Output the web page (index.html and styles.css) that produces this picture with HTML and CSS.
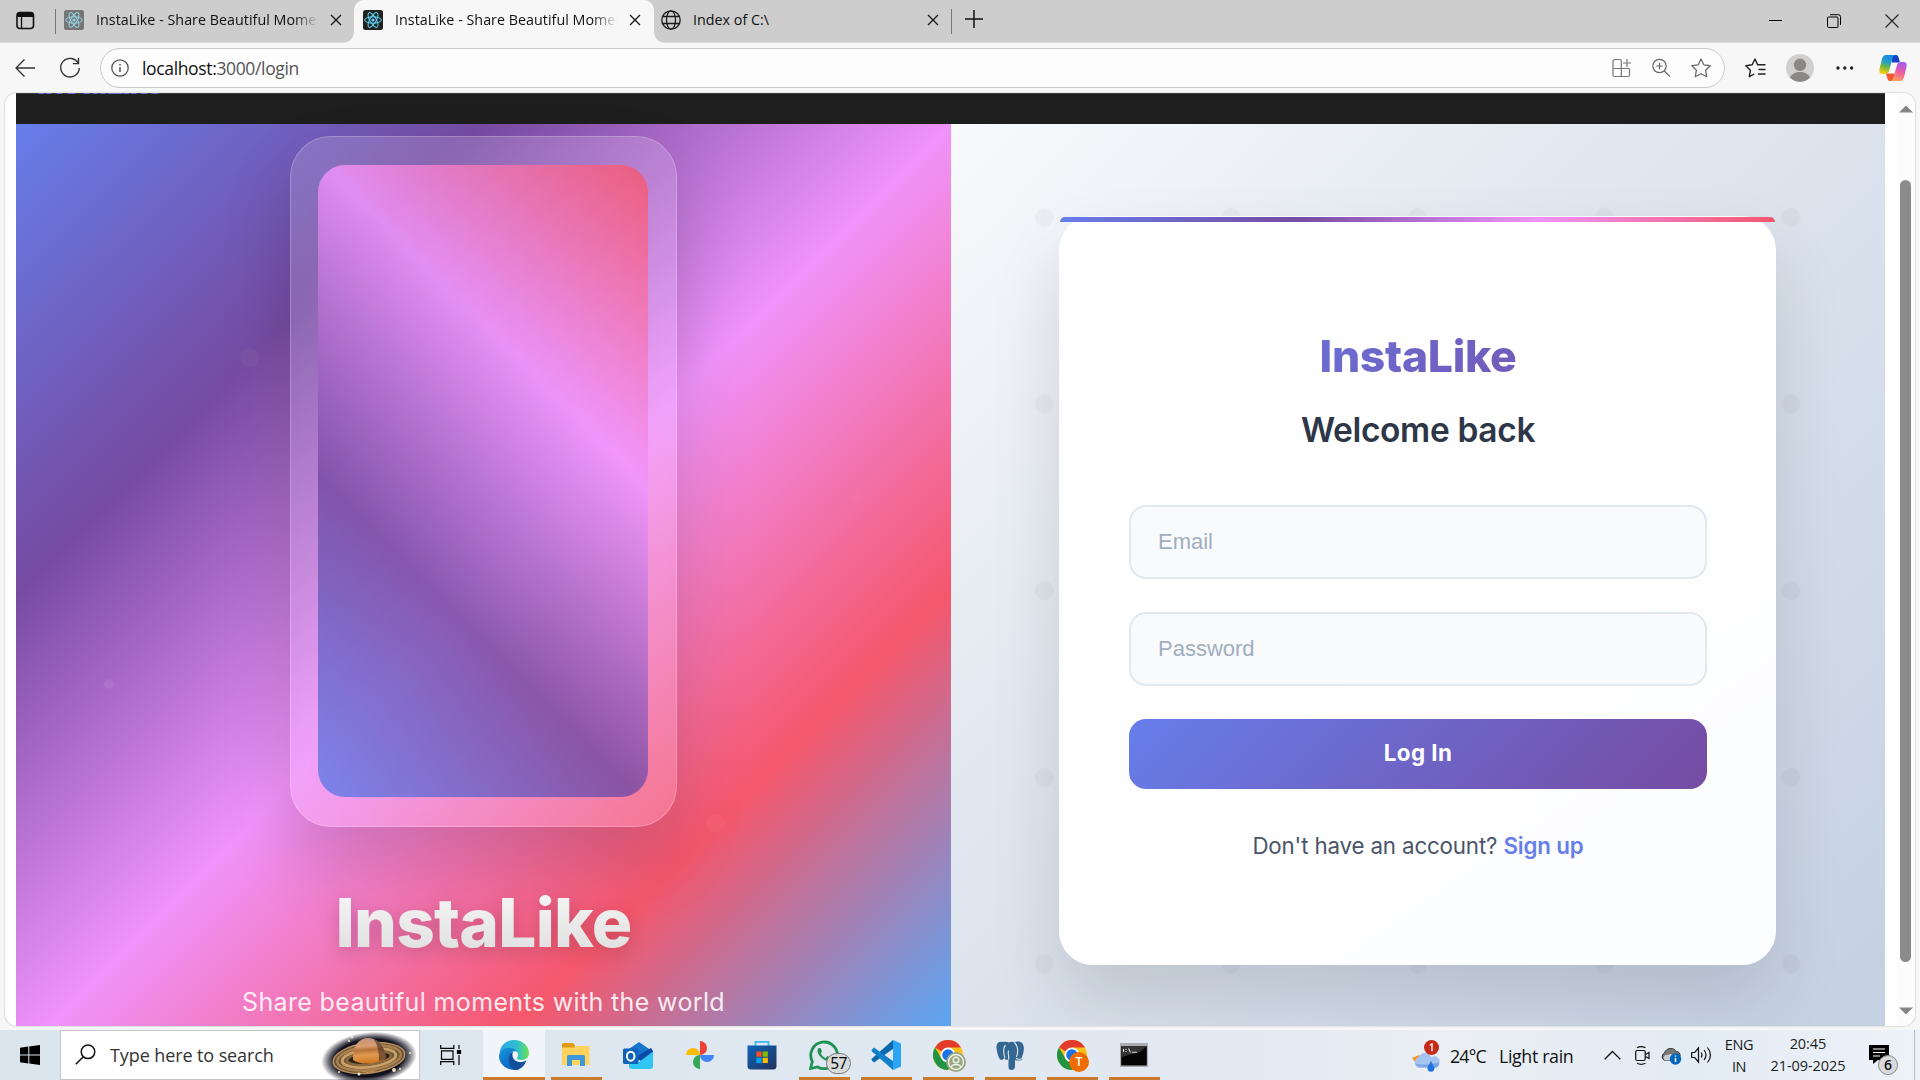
FILE: index.html
```html
<!DOCTYPE html>
<html lang="en">
<head>
<meta charset="utf-8">
<title>InstaLike - Share Beautiful Moments</title>
<link rel="stylesheet" href="styles.css">
</head>
<body>
<svg class="defs" width="0" height="0" aria-hidden="true">
  <defs>
    <symbol id="react" viewBox="0 0 20 20">
      <rect width="20" height="20" rx="2.5" fill="#222"/>
      <g fill="none" stroke="#61dafb" stroke-width="1">
        <ellipse cx="10" cy="10" rx="8.3" ry="3.2"/>
        <ellipse cx="10" cy="10" rx="8.3" ry="3.2" transform="rotate(60 10 10)"/>
        <ellipse cx="10" cy="10" rx="8.3" ry="3.2" transform="rotate(120 10 10)"/>
      </g>
      <circle cx="10" cy="10" r="1.6" fill="#61dafb"/>
    </symbol>
    <symbol id="cross" viewBox="0 0 12 12"><path d="M1 1l10 10M11 1L1 11" stroke="#1b1b1b" stroke-width="1.4" fill="none"/></symbol>
    <symbol id="chrome" viewBox="0 0 30 30">
      <circle cx="15" cy="15" r="15" fill="#fbc116"/>
      <path d="M15 15L2 7.5A15 15 0 0 1 28 7.5H15z" fill="#e33b2e"/>
      <path d="M2 7.5A15 15 0 0 0 15 30L21.5 18.7 15 15 8.5 18.7z" fill="#229342"/>
      <circle cx="15" cy="15" r="7.5" fill="#fff"/><circle cx="15" cy="15" r="5.8" fill="#1a73e8"/>
    </symbol>
  </defs>
</svg>

<div class="tabstrip">
  <div class="workspace">
    <svg width="19" height="19" viewBox="0 0 19 19"><rect x="1" y="1.5" width="16.500" height="16" rx="3" fill="none" stroke="#111" stroke-width="1.600"/><path d="M1 6V4a3 3 0 0 1 3-3h10.500a3 3 0 0 1 3 3v2z" fill="#111"/><path d="M5.500 5v12" stroke="#111" stroke-width="1.300"/></svg>
  </div>
  <i class="divider"></i>
  <div class="tab tab-first">
    <svg class="favicon faded" width="20" height="20"><use href="#react"/></svg>
    <span class="tab-title fade">InstaLike - Share Beautiful Moments</span>
    <svg class="close" width="12" height="12"><use href="#cross"/></svg>
  </div>
  <div class="tab tab-active">
    <svg class="favicon" width="20" height="20"><use href="#react"/></svg>
    <span class="tab-title fade">InstaLike - Share Beautiful Moments</span>
    <svg class="close" width="12" height="12"><use href="#cross"/></svg>
  </div>
  <div class="tab tab-last">
    <svg class="favicon" width="20" height="20" viewBox="0 0 20 20" fill="none" stroke="#1b1b1b" stroke-width="1.300"><circle cx="10" cy="10" r="9.200"/><ellipse cx="10" cy="10" rx="4.500" ry="9.200"/><path d="M1.700 6.500h16.600M1.700 13.500h16.600"/></svg>
    <span class="tab-title">Index of C:\</span>
    <svg class="close" width="12" height="12"><use href="#cross"/></svg>
  </div>
  <i class="divider"></i>
  <svg class="plus" width="18" height="18" viewBox="0 0 18 18"><path d="M9 0v18M0 9h18" stroke="#111" stroke-width="1.500"/></svg>
  <div class="window-controls">
    <svg width="14" height="14" viewBox="0 0 14 14"><path d="M0 6.500h13" stroke="#000"/></svg>
    <svg width="14" height="14" viewBox="0 0 14 14" fill="none" stroke="#000"><rect x=".5" y="3" width="10.500" height="10.500" rx="1"/><path d="M3 .7h8.500a2 2 0 0 1 2 2V11"/></svg>
    <svg width="14" height="14" viewBox="0 0 14 14"><path d="M.5.5l13 13M13.500.5l-13 13" stroke="#222" stroke-width="1.100"/></svg>
  </div>
</div>

<div class="toolbar">
  <svg class="back" width="20" height="20" viewBox="0 0 20 20" fill="none" stroke="#333" stroke-width="1.300"><path d="M20 10H1M9.500 1.500L1 10l8.500 8.500"/></svg>
  <svg class="reload" width="22" height="22" viewBox="0 0 22 22" fill="none" stroke="#333" stroke-width="1.400"><path d="M19.300 6.500A9.300 9.300 0 1 0 20.300 11M19.500 1v5.600h-5.700"/></svg>
  <div class="address">
    <svg width="18" height="18" viewBox="0 0 18 18" fill="none" stroke="#555" stroke-width="1.300"><circle cx="9" cy="9" r="8.200"/><path d="M9 8v5M9 5v1.500" stroke-width="1.500"/></svg>
    <span class="url">localhost:<em>3000/login</em></span>
    <div class="address-actions">
      <svg width="20" height="20" viewBox="0 0 20 20" fill="none" stroke="#777" stroke-width="1.200"><path d="M9.500 1.500H4a2 2 0 0 0-2 2V17a1.500 1.500 0 0 0 1.500 1.500H17a1.500 1.500 0 0 0 1.500-1.500v-5.500a1 1 0 0 0-1-1H2M10.300 18.500V3a1.500 1.500 0 0 0-1.500-1.500M16 1v8M12 5h8"/></svg>
      <svg width="20" height="20" viewBox="0 0 20 20" fill="none" stroke="#666" stroke-width="1.200"><circle cx="8.500" cy="8" r="6.700"/><path d="M13.400 13l5.600 5.700M8.500 4.800v6.400M5.300 8h6.400"/></svg>
      <svg width="20" height="20" viewBox="0 0 20 20" fill="none" stroke="#666" stroke-width="1.200" stroke-linejoin="round"><path d="M10 1l2.800 5.800 6.400.9-4.600 4.500 1.100 6.500-5.700-3-5.700 3 1.100-6.500L.8 7.700l6.400-.9z"/></svg>
    </div>
  </div>
  <svg class="favorites" width="21" height="20" viewBox="0 0 21 20" fill="none" stroke="#222" stroke-width="1.400" stroke-linejoin="round"><path d="M12 6.800h8.500M13.500 11.500h7M13 16h7.500M12.500 6.500L10 1 7.200 6.800.8 7.700l4.600 4.500-1.100 6.500 5-2.700"/></svg>
  <svg class="avatar" width="28" height="28" viewBox="0 0 28 28"><circle cx="14" cy="14" r="14" fill="#d2d0ce"/><circle cx="14" cy="10.800" r="6.200" fill="#8a8886"/><path d="M4 23.500C6 19.500 10 18 14 18s8 1.500 10 5.500a14 14 0 0 1-20 0z" fill="#8a8886"/></svg>
  <svg class="more" width="18" height="4" viewBox="0 0 18 4" fill="#222"><circle cx="2" cy="2" r="1.700"/><circle cx="8.800" cy="2" r="1.700"/><circle cx="15.600" cy="2" r="1.700"/></svg>
  <svg class="copilot" width="28" height="26" viewBox="0 0 28 26">
    <defs>
      <linearGradient id="cpA" x1=".6" y1="0" x2=".3" y2="1"><stop offset="0" stop-color="#1485e8"/><stop offset=".4" stop-color="#27a2c5"/><stop offset=".65" stop-color="#76b83a"/><stop offset="1" stop-color="#ffd00a"/></linearGradient>
      <linearGradient id="cpB" x1=".6" y1="0" x2=".3" y2="1"><stop offset="0" stop-color="#a35bf0"/><stop offset=".5" stop-color="#ee5ba0"/><stop offset="1" stop-color="#ffa45a"/></linearGradient>
    </defs>
    <path d="M13 0h4c2 0 2.500 2 3 4l1 3.500h-8z" fill="#1542c8"/>
    <path d="M15 26h-4c-2 0-2.500-2-3-4l-1-3.500h8z" fill="#f4582e"/>
    <path d="M7 0h10c-2 0-3 2-3.600 4l-3 10.500C9.500 18 8 19 5 19H3.500C0 19 0 16 .6 13.500L3 4C3.700 1.500 5 0 7 0z" fill="url(#cpA)"/>
    <path d="M21 26H11c2 0 3-2 3.600-4l3-10.500C18.500 8 20 7 23 7h1.500c3.500 0 3.500 3 2.900 5.500L25 22c-.7 2.500-2 4-4 4z" fill="url(#cpB)"/>
  </svg>
</div>

<div class="viewport">
  <main class="page">
    <header class="site-header"><span class="site-logo">InstaLike</span></header>
    <div class="split">
      <section class="hero">
        <i class="bubble b1"></i><i class="bubble b2"></i><i class="bubble b3"></i><i class="bubble b4"></i>
        <div class="phone"><div class="phone-screen"></div></div>
        <h1 class="hero-title">InstaLike</h1>
        <p class="hero-tagline">Share beautiful moments with the world</p>
      </section>
      <section class="login">
        <form class="card">
          <h2 class="card-logo"><span>InstaLike</span></h2>
          <h3 class="card-heading">Welcome back</h3>
          <input class="field" type="email" placeholder="Email">
          <input class="field" type="password" placeholder="Password">
          <button class="submit" type="button">Log In</button>
          <p class="switch">Don't have an account? <a class="switch-link">Sign up</a></p>
        </form>
      </section>
    </div>
  </main>
  <aside class="scrollbar">
    <svg width="14" height="8" viewBox="0 0 14 8"><path d="M0 7.500L7 .5l7 7z" fill="#858585"/></svg>
    <i class="thumb"></i>
    <svg class="down" width="14" height="8" viewBox="0 0 14 8"><path d="M0 .5l7 7 7-7z" fill="#858585"/></svg>
  </aside>
</div>

<footer class="taskbar">
  <div class="start"><svg width="20" height="20" viewBox="0 0 20 20"><path d="M0 2.800l8.300-1.200v8H0zM9.300 1.400L20 0v9.600H9.300zM0 10.500h8.300v8L0 17.300zM9.300 10.500H20V20L9.300 18.600z"/></svg></div>
  <div class="search">
    <svg width="21" height="21" viewBox="0 0 21 21" fill="none" stroke="#111" stroke-width="1.500"><circle cx="13" cy="7.800" r="6.800"/><path d="M8.300 12.700L.8 20.300"/></svg>
    <span class="search-text">Type here to search</span>
    <svg class="saturn" width="97" height="48" viewBox="0 0 97 48">
      <defs>
        <radialGradient id="sky"><stop offset="0" stop-color="#0d0d1c"/><stop offset=".72" stop-color="#10101f"/><stop offset=".86" stop-color="#10101f" stop-opacity=".55"/><stop offset="1" stop-color="#10101f" stop-opacity="0"/></radialGradient>
        <linearGradient id="planet" x1="0" y1="0" x2=".1" y2="1"><stop offset="0" stop-color="#b98d80"/><stop offset=".35" stop-color="#d9a070"/><stop offset=".5" stop-color="#b8703a"/><stop offset=".7" stop-color="#e09a52"/><stop offset="1" stop-color="#d27a22"/></linearGradient>
      </defs>
      <ellipse cx="48" cy="26" rx="48" ry="26" transform="rotate(-6 49 26)" fill="url(#sky)"/>
      <g transform="rotate(-7 48 26)" fill="none">
        <ellipse cx="48" cy="26" rx="36" ry="15" fill="#6d5438" stroke="#b9925c" stroke-width="1.500"/>
        <ellipse cx="48" cy="26" rx="32" ry="12" stroke="#a98250" stroke-width="2.500"/>
        <ellipse cx="48" cy="26" rx="27" ry="9" stroke="#caa066" stroke-width="3"/>
        <ellipse cx="48" cy="26" rx="22" ry="6.500" fill="#2a2119" stroke="#8a6840" stroke-width="2.500"/>
      </g>
      <path d="M32 28C31 14 38 6 47 6s16 6 18 20c-8 6-24 8-33 2z" fill="url(#planet)"/>
      <path d="M52 7c8 2 12 10 13 19l-7 3c0-9-1-17-6-22z" fill="#3c2a24" opacity=".6"/>
      <path d="M38 38q9 3 19-.5-5 3.500-10 3.500t-9-3z" fill="#c98a50"/>
      <g fill="#f3e6c4"><circle cx="31" cy="5" r="1.300"/><circle cx="28" cy="9" r="1"/><circle cx="89" cy="21" r="1.100"/><circle cx="73" cy="38" r="1.900"/><circle cx="79" cy="37" r="1"/><circle cx="38" cy="42" r="1.500"/><circle cx="18" cy="40" r="1"/></g>
    </svg>
  </div>
  <div class="taskview"><svg width="22" height="20" viewBox="0 0 22 20" fill="none" stroke="#000" stroke-width="1.200"><path d="M.7 0v3.300h13.100V0M.7 20v-3.300h13.100V20M1.500 5.800h11.500v8.500H1.500zM19 0v4M19 10v10"/><path d="M17.500 5.500h3v3h-3z" fill="#000"/></svg></div>
  <div class="apps">
    <div class="app current"><svg width="30" height="30" viewBox="0 0 30 30">
      <defs><linearGradient id="edA" x1="0" x2="1"><stop offset="0" stop-color="#2ba8e8"/><stop offset=".6" stop-color="#2fc0ce"/><stop offset="1" stop-color="#6ae04b"/></linearGradient><linearGradient id="edB" x1="0" y1="0" x2=".6" y2="1"><stop offset="0" stop-color="#1796e2"/><stop offset="1" stop-color="#0b62b8"/></linearGradient></defs>
      <path d="M.5 13C1.500 5 7.500 0 15 0c9 0 15 6.500 15 13 0 5-4 7-7.500 7-3 0-5-1-4.500-2 2-2.500 1-5-.5-6.500C14 8 4.500 7.500.5 13z" fill="url(#edA)"/>
      <path d="M0 16C.5 10 6 7.500 11 8c4 .4 6.500 2.300 7 4-3-2-7 .5-7.500 4-.6 6 4.500 11.500 9.500 13.200C11 32 0 26 0 16z" fill="url(#edB)"/>
      <path d="M10 17c.3-3 2-5 4.300-5.200C12 15 14 21 20 22c3 .4 5.500-.5 7.500-1.700C26 25 22 30 17 30c-5-1-8-7-7-13z" fill="#124f9c"/></svg></div>
    <div class="app running"><svg width="28" height="24" viewBox="0 0 28 24"><path d="M0 2a2 2 0 0 1 2-2h9l2 2.500V6H0z" fill="#dd9a12"/><path d="M0 4.500h13l1-1.500h12a1.500 1.500 0 0 1 1.500 1.500V22H0z" fill="#ffd35c"/><path d="M5 13.500A1.500 1.500 0 0 1 6.500 12h15a1.500 1.500 0 0 1 1.500 1.500V23h-5v-6h-8v6H5z" fill="#3d97dc"/></svg></div>
    <div class="app"><svg width="30" height="27" viewBox="0 0 30 27"><path d="M3 9L16 0l13 9v15L16 18z" fill="#1774cf"/><path d="M11 16L28 6l2 3v14z" fill="#0b4aa8"/><path d="M6 20h10L30 9.500V24a3 3 0 0 1-3 3H9a3 3 0 0 1-3-3z" fill="#30c6f3"/><rect y="6.500" width="15.500" height="15.500" rx="1.500" fill="#0f64b8"/><ellipse cx="7.700" cy="14.200" rx="3.800" ry="4.500" fill="none" stroke="#fff" stroke-width="2"/></svg></div>
    <div class="app"><svg width="28" height="28" viewBox="0 0 28 28"><path d="M14 14V0a7 7 0 0 1 0 14z" fill="#ea4335"/><path d="M14 14H0a7 7 0 0 1 14 0z" fill="#fbbc04"/><path d="M14 14v14a7 7 0 0 1 0-14z" fill="#34a853"/><path d="M14 14h14a7 7 0 0 1-14 0z" fill="#4285f4"/></svg></div>
    <div class="app"><svg width="30" height="30" viewBox="0 0 30 30"><defs><linearGradient id="ms" x1="0" y1="0" x2="1" y2="1"><stop offset="0" stop-color="#0a67bb"/><stop offset="1" stop-color="#24305c"/></linearGradient></defs><path d="M8.500 6V1.800h13V6" fill="none" stroke="#38bdf2" stroke-width="1.800"/><path d="M.5 5.500h29V26a3.500 3.500 0 0 1-3.500 3.500H4A3.500 3.500 0 0 1 .5 26z" fill="url(#ms)"/><path d="M9.300 11.500h5.300v5.300H9.300z" fill="#f25022"/><path d="M15.600 11.500h5.300v5.300h-5.300z" fill="#7fba00"/><path d="M9.300 17.800h5.300v5.300H9.300z" fill="#00a4ef"/><path d="M15.600 17.800h5.300v5.300h-5.300z" fill="#ffb900"/></svg></div>
    <div class="app running"><svg width="30" height="30" viewBox="0 0 30 30"><path d="M1.500 28.500l1.800-7A13.300 13.300 0 1 1 8.700 27z" fill="none" stroke="#1f9254" stroke-width="2.800"/><path d="M10 8c-2 1-2 4 0 7 2.500 3.500 6 6 9 6 2 0 3.500-1.500 3.200-3.200l-3.700-1.700-1.800 1.900c-2-.8-4-2.500-5-4.700l1.300-1.800L11.500 8z" fill="#1f9254"/></svg><b class="badge whatsapp-badge">57</b></div>
    <div class="app running"><svg width="30" height="30" viewBox="0 0 30 30"><path d="M22 0L1 18.500a1.500 1.500 0 0 0 0 2L3 22.500l19.500-14z" fill="#0b68ad"/><path d="M22 30L1 11.500a1.500 1.500 0 0 1 0-2L3 7.500l19.500 14z" fill="#1181cc"/><path d="M22 0l8 3.500v23L22 30z" fill="#2ba5f5"/></svg></div>
    <div class="app running"><svg width="30" height="30"><use href="#chrome"/></svg><b class="badge profile-badge"><svg width="18" height="18" viewBox="0 0 18 18" fill="none" stroke="#eef3e4" stroke-width="1.400"><circle cx="9" cy="9" r="7.500"/><circle cx="9" cy="7" r="2.800"/><path d="M4 14.500c1-4 9-4 10 0"/></svg></b></div>
    <div class="app running"><svg width="28" height="29" viewBox="0 0 28 29"><path d="M7 1C3 0 0 2 .5 7c.5 5 2.500 12 5 12 1.500 0 2-1.500 3-2 .5 2 3 2 4 1.500V26c0 2 1 3 3 3s3.500-1 3.500-3.500V19c2 1 6 1 8.500-1.500-1 0-2 0-2-.5C28 12 29 5 26 2c-2.500-2-6-1.500-7.500-.8-2-.7-4-.7-5.500.3C11 .5 9 .5 7 1z" fill="#336791"/><path d="M9 17C7 12 7.500 6 9.500 4M18.500 1.500C22 5 22.500 11 20.500 16M12.500 18.500c1-3-1-5 0-9M20 17.500c2 1 4 1 7 0" fill="none" stroke="#e3ebf3" stroke-width="1.100"/></svg></div>
    <div class="app running"><svg width="30" height="30"><use href="#chrome"/></svg><b class="badge t-badge">T</b></div>
    <div class="app running"><svg width="28" height="24" viewBox="0 0 28 24"><path d="M0 0h28v24H0z" fill="#a9adb0"/><path d="M1.200 3h25.600v19.500H1.200z" fill="#050505"/><path d="M1.200 3h25.600L20 9 1.200 14z" fill="#333"/><path d="M3.500 6v3M6 6v1M6 8v1M8.500 5.500l2 4M12 9.200h5" stroke="#ddd" stroke-width="1.100" fill="none"/></svg></div>
  </div>
  <div class="weather">
    <svg width="29" height="32" viewBox="0 0 29 32"><path d="M0 18l7-3 4 3-4 5-4-1z" fill="#f2952b"/><path d="M7 28a5.500 5.500 0 0 1-.5-10.500C8 12 17 11 19 17c5-2 9.500 1 8.500 6a5 5 0 0 1-5 5z" fill="#a3c3f2"/><path d="M7 26.500a5 5 0 0 1-3.500-3c5 2 15 1 23.500-1a5 5 0 0 1-4.500 5.500z" fill="#7ba4e6"/><path d="M19 21l3.200 6a3.500 3.500 0 1 1-6.500 0z" fill="#1f74df"/><circle cx="19.500" cy="7.500" r="7.500" fill="#c42b1c"/><path d="M17.800 5.300L20 4v7.300" fill="none" stroke="#fff" stroke-width="1.300"/></svg>
    <span class="temp">24°C</span><span class="cond">Light rain</span>
  </div>
  <div class="tray">
    <svg class="chevron" width="17" height="10" viewBox="0 0 17 10"><path d="M.7 9.300l7.800-7.800 7.800 7.800" fill="none" stroke="#111" stroke-width="1.300"/></svg>
    <svg class="meet" width="15" height="19" viewBox="0 0 15 19" fill="none" stroke="#111" stroke-width="1.200"><rect x=".7" y="4.500" width="9.500" height="10" rx="1.500"/><path d="M10.500 8.500l3.500-2v6l-3.500-2M2 1.700q4-2 8.500 0M2 17.300q4 2 8.500 0"/></svg>
    <svg class="cloud" width="21" height="18" viewBox="0 0 21 18"><path d="M4 13.500a4 4 0 0 1-.5-7.500C5 .5 13 0 15 4.500c3 0 4.500 2 4 5L12 13.500z" fill="#777" stroke="#333"/><path d="M4 13.500C1 11 4 7 7 8c2-2 6-1 6 2v3.500z" fill="#ccc"/><circle cx="14.500" cy="12" r="5.700" fill="#0067c0"/><path d="M14.500 11v4M14.500 8.500v1.300" stroke="#fff" stroke-width="1.500"/></svg>
    <svg class="volume" width="22" height="18" viewBox="0 0 22 18" fill="none" stroke="#111" stroke-width="1.200"><path d="M.7 6.500h3L7.500 2v14l-3.800-4.500h-3zM10 6.500q2 2.500 0 5M13 4q4 5 0 10M16.500 1.500q6 7.500 0 15"/></svg>
    <div class="lang"><span>ENG</span><span>IN</span></div>
    <div class="clock"><span>20:45</span><span>21-09-2025</span></div>
    <div class="notify"><svg width="20" height="20" viewBox="0 0 20 20"><path d="M0 0h20v15H9l-5 4v-4H0z"/><path d="M4 4h12M4 7.500h12M4 11h7" stroke="#fff" stroke-width="1.200"/></svg><b class="badge notify-badge">6</b></div>
    <i class="peek"></i>
  </div>
</footer>
</body>
</html>
```
FILE: styles.css
```css
* { box-sizing: border-box; }
body { margin: 0; width: 1920px; height: 1080px; overflow: hidden; display: flex; flex-direction: column; background: #f7f7f7; font-family: "Open Sans", "Noto Sans", sans-serif; color: #111; }
svg { display: block; flex: none; }
.defs { position: absolute; }

/* Tab strip */
.tabstrip { flex: none; height: 43px; display: flex; align-items: flex-start; background: #cdcdcd; border-bottom: 1px solid #dedede; }
.workspace { width: 55px; padding: 11px 0 0 16px; }
.divider { flex: none; width: 1px; height: 25px; margin-top: 9px; background: #777; }
.tab { height: 43px; display: flex; align-items: flex-start; padding-top: 10px; }
.tab-first { width: 298px; padding-left: 8px; background: #cdcdcd; border-bottom: 1px solid #dedede; border-bottom-right-radius: 10px; }
.tab-active { position: relative; width: 300px; padding-left: 9px; background: #f7f7f7; border-radius: 10px 10px 0 0; }
.tab-last { width: 297px; padding-left: 7px; background: #cdcdcd; border-bottom: 1px solid #dedede; border-bottom-left-radius: 10px; }
.tab-active::before, .tab-active::after { content: ""; position: absolute; bottom: 0; width: 10px; height: 10px; }
.tab-active::before { left: -10px; background: radial-gradient(circle at 0 0, #cdcdcd 9px, #f7f7f7 10px); }
.tab-active::after { right: -10px; background: radial-gradient(circle at 100% 0, #cdcdcd 9px, #f7f7f7 10px); }
.favicon { margin-right: 12px; }
.faded { opacity: .5; }
.tab-title { width: 222px; height: 20px; line-height: 19px; font-size: 14.300px; letter-spacing: .02px; white-space: nowrap; overflow: hidden; }
.fade { -webkit-mask-image: linear-gradient(90deg, #000 89%, transparent 100%); mask-image: linear-gradient(90deg, #000 89%, transparent 100%); }
.close { margin: 4px 0 0 12px; }
.plus { margin: 10px 0 0 13px; }
.window-controls { margin-left: auto; display: flex; gap: 44px; padding: 14px 21px 0 0; }

/* Toolbar */
.toolbar { flex: none; height: 50px; display: flex; align-items: center; padding: 0 13px 1px 15px; }
.reload { margin: 0 19px 0 24px; }
.address { width: 1625px; height: 40px; display: flex; align-items: center; background: #fdfdfd; border: 1px solid #c9c9c9; border-radius: 20px; padding: 0 13px 0 10px; }
.url { margin-left: 13px; font-size: 17.500px; letter-spacing: -.35px; color: #111; }
.url em { font-style: normal; color: #555; }
.address-actions { margin-left: auto; display: flex; gap: 20px; }
.favorites { margin-left: 20px; }
.avatar { margin-left: 20px; }
.more { margin-left: 22px; }
.copilot { margin-left: auto; }

/* Browser viewport */
.viewport { flex: none; height: 933px; width: 1910px; margin-left: 5px; display: flex; background: #fff; border-radius: 12px; overflow: hidden; box-shadow: 0 0 2px #aaa; }
.page { width: 1869px; margin-left: 11px; font-family: Inter, sans-serif; }
.site-header { height: 31px; overflow: hidden; padding-left: 21px; background: linear-gradient(#3a3f3f 1px, #1e1e1e 1px); }
.site-logo { display: block; width: 125px; margin-top: -16.500px; font-size: 31px; line-height: 12px; font-weight: 800; letter-spacing: -1.500px; color: #7471d4; }
.split { display: grid; grid-template-columns: 935px 934px; height: 934px; }
.scrollbar { width: 18px; margin-left: auto; display: flex; flex-direction: column; align-items: center; padding: 12px 1px 0 0; background: #fcfcfc; }
.thumb { width: 11px; height: 782px; margin-top: 67px; border-radius: 6px; background: #8b8b8b; }
.down { margin-top: 45px; }

/* Left panel */
.hero { position: relative; display: flex; flex-direction: column; align-items: center; padding-top: 12px; background: linear-gradient(135deg, #667eea 0%, #764ba2 25%, #f093fb 50%, #f5576c 75%, #4facfe 100%); }
.bubble { position: absolute; border-radius: 50%; background: rgba(255, 255, 255, .04); }
.b1 { left: 224px; top: 224px; width: 19px; height: 19px; }
.b2 { left: 88px; top: 555px; width: 10px; height: 10px; background: rgba(255, 255, 255, .07); }
.b3 { left: 690px; top: 690px; width: 19px; height: 19px; }
.b4 { left: 834px; top: 368px; width: 10px; height: 10px; background: rgba(255, 255, 255, .025); }
.phone { position: relative; flex: none; width: 387px; height: 691px; padding: 28px 28px; border-radius: 41px; background: rgba(255, 255, 255, .15); border: 1px solid rgba(255, 255, 255, .22); backdrop-filter: blur(20px); box-shadow: 0 35px 70px rgba(0, 0, 0, .15); }
.phone-screen { width: 330px; height: 632px; margin-left: -1px; border-radius: 27px; opacity: .84; background: linear-gradient(45deg, #667eea 0%, #764ba2 33.300%, #f093fb 66.600%, #f5576c 100%); }
.hero-title { margin: 55px 0 0; font-size: 67.500px; line-height: 81px; font-weight: 800; letter-spacing: -.8px; background: linear-gradient(180deg, #f6f6f6 10%, #e2e2e2 80%); -webkit-background-clip: text; background-clip: text; color: transparent; filter: drop-shadow(0 5px 9px rgba(0, 0, 0, .18)); }
.hero-tagline { margin: 23px 0 0; font-size: 25px; line-height: 32px; letter-spacing: .36px; color: rgba(255, 255, 255, .88); }

/* Right panel */
.login { padding: 92px 0 0 108px; background: radial-gradient(circle 9.500px at center, rgba(0, 0, 0, .03) 96%, transparent 100%) 0 0 / 186.700px 186.700px, linear-gradient(135deg, #f8fafc 0%, #e2e8f0 36%, #c3cfe2 100%); }
.card { position: relative; width: 717px; height: 749px; padding: 110px 69px 0 70px; border-radius: 34px; background: linear-gradient(145deg, #fff 0%, #fefefe 50%, #fcfdff 100%); box-shadow: 0 35px 70px rgba(0, 0, 0, .12); text-align: center; }
.card::before { content: ""; position: absolute; left: 1px; right: 1px; top: 1px; height: 5px; border-radius: 5px 5px 0 0; background: linear-gradient(90deg, #667eea, #764ba2 33.300%, #f093fb 66.600%, #f5576c); }
.card-logo { margin: 0; font-size: 44.500px; line-height: 60px; font-weight: 800; letter-spacing: -.3px; background: linear-gradient(135deg, #667eea, #764ba2); -webkit-background-clip: text; background-clip: text; color: transparent; }
.card-heading { margin: 23px 0 54px; font-size: 33.500px; line-height: 42px; font-weight: 600; letter-spacing: -.35px; color: #2d3748; }
.field { display: block; width: 578px; height: 74px; margin: 0 0 33px; padding: 0 27px; border: 2px solid #e2e8f0; border-radius: 17px; background: #f9fafc; font-family: "Liberation Sans", Arial, sans-serif; font-size: 22px; }
.field::placeholder { color: #a0aec0; opacity: 1; }
.submit { display: block; width: 578px; height: 70px; padding: 0 0 3px; border: 0; border-radius: 17px; background: linear-gradient(135deg, #667eea, #764ba2); color: #fff; font: 700 22.300px Inter, sans-serif; letter-spacing: .45px; }
.switch { margin: 42px 0 0; font-size: 22.300px; line-height: 30px; letter-spacing: -.14px; color: #4a5568; }
.switch-link { color: #667eea; font-weight: 600; }

/* Taskbar */
.taskbar { flex: none; height: 50px; margin-top: 4px; display: flex; background: linear-gradient(90deg, #dae5ed, #dfe7f1 40%, #e2e9f2 65%, #ebeff4 75%, #e3ebf4 88%, #edf2f8); }
.start { width: 60px; padding: 15px 0 0 20px; }
.search { width: 360px; display: flex; align-items: flex-start; padding: 13px 0 0 14px; border: 1px solid #c5c5c5; background: #fff; }
.search-text { margin: -1px 0 0 14px; width: 171px; font-size: 18px; line-height: 24px; letter-spacing: -.1px; white-space: nowrap; color: #333; }
.saturn { margin: -12px 0 0 40px; }
.taskview { width: 63px; padding: 15px 0 0 20px; }
.apps { display: flex; }
.app { position: relative; width: 62px; height: 50px; display: flex; align-items: center; justify-content: center; }
.current { background: #f1f5f9; border-bottom: 3px solid #ca7a2c; padding-top: 3px; }
.running::after { content: ""; position: absolute; left: 6px; width: 51px; bottom: 0; height: 3px; background: #ca7a2c; }
.badge { position: absolute; display: flex; align-items: center; justify-content: center; border-radius: 50%; font-weight: 400; line-height: 1; }
.whatsapp-badge { left: 33px; top: 23px; width: 25px; height: 21px; border-radius: 11px; background: #d7dbdc; border: 1px solid #777; font-size: 15.500px; letter-spacing: -.5px; color: #000; font-weight: 500; }
.profile-badge { left: 29px; top: 22px; width: 20px; height: 20px; background: #96a582; }
.t-badge { left: 28px; top: 22px; width: 20px; height: 20px; background: #ef6c00; color: #fff; font: 500 12px Roboto, sans-serif; }
.weather { width: 210px; margin-left: 247px; display: flex; align-items: flex-start; padding: 10px 0 0 0; font-size: 17.800px; white-space: nowrap; }
.temp { margin: 4px 10px 0 9px; line-height: 24px; width: 39px; letter-spacing: -.8px; }
.cond { margin-top: 4px; line-height: 24px; letter-spacing: -.35px; }
.tray { flex: 1; display: flex; align-items: flex-start; }
.chevron { margin: 20px 0 0 -18px; }
.meet { margin: 16px 0 0 14px; }
.cloud { margin: 17px 0 0 11px; }
.volume { margin: 16px 0 0 9px; }
.lang, .clock { display: flex; flex-direction: column; align-items: center; font-size: 14.500px; line-height: 22px; letter-spacing: -.4px; padding-top: 4px; color: #222; }
.lang { width: 52px; }
.clock { width: 86px; padding-top: 3px; letter-spacing: -.05px; }
.notify { position: relative; margin: 15px 0 0 18px; }
.notify-badge { left: 9px; top: 10px; width: 20px; height: 20px; background: #d9dadb; border: 1px solid #888; font-size: 14px; font-weight: 600; }
.peek { width: 1px; height: 50px; margin-left: 25px; background: #b5bcc3; }
```
